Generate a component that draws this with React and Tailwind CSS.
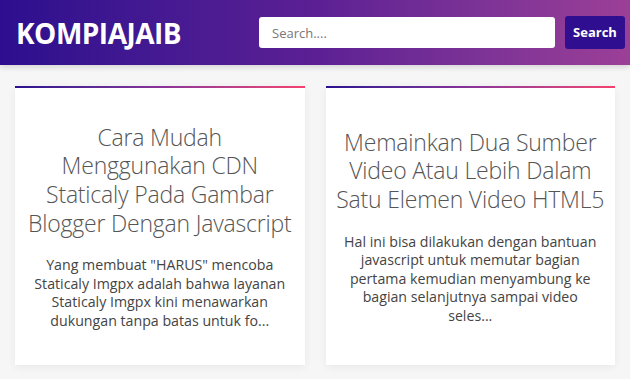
function Card({ title, excerpt }) {
  return (
    <article className="h-[279px] bg-white shadow-[0_2px_8px_rgba(0,0,0,0.06)] flex flex-col">
      <div className="h-[2px] bg-gradient-to-r from-[#2c0f8f] via-[#8a3399] to-[#f5406e]" />
      <div className="flex-1 flex flex-col justify-center items-center px-[4px] text-center">
        <h2 className="text-[23px] font-light leading-[28.7px] text-[#555] tracking-[-0.2px]">
          {title.map((l, i) => (
            <span key={i} className="block whitespace-nowrap">{l}</span>
          ))}
        </h2>
        <p className="mt-[19px] text-[14.2px] leading-[18.5px] text-[#444]">
          {excerpt.map((l, i) => (
            <span key={i} className="block whitespace-nowrap">{l}</span>
          ))}
        </p>
      </div>
    </article>
  );
}

export default function App() {
  const font = { fontFamily: '"Open Sans", "Noto Sans", sans-serif' };
  return (
    <div className="min-h-[379px] bg-[#f6f6f6]" style={font}>
      <header className="h-[65px] flex items-center justify-between pl-[16px] pr-[5px] bg-gradient-to-r from-[#2d0e8e] via-[#5c1f94] to-[#9c3f97] shadow-[0_2px_6px_rgba(0,0,0,0.15)]">
        <div className="text-white font-bold text-[28px] tracking-[-0.5px] leading-none">KOMPIAJAIB</div>
        <div className="flex items-center gap-[10px]">
          <input
            className="w-[296px] h-[31px] bg-white rounded-[3px] px-[13px] text-[13px] text-[#333] placeholder-[#777] outline-none"
            placeholder="Search...."
          />
          <button className="w-[60px] h-[33px] rounded-[3px] bg-[#2f0f8f] text-white text-[13px] font-bold">
            Search
          </button>
        </div>
      </header>
      <main className="grid grid-cols-2 gap-[21px] px-[15px] pt-[21px] pb-[14px]">
        <Card
          title={["Cara Mudah", "Menggunakan CDN", "Staticaly Pada Gambar", "Blogger Dengan Javascript"]}
          excerpt={[
            'Yang membuat "HARUS" mencoba',
            "Staticaly Imgpx adalah bahwa layanan",
            "Staticaly Imgpx kini menawarkan",
            "dukungan tanpa batas untuk fo...",
          ]}
        />
        <Card
          title={["Memainkan Dua Sumber", "Video Atau Lebih Dalam", "Satu Elemen Video HTML5"]}
          excerpt={[
            "Hal ini bisa dilakukan dengan bantuan",
            "javascript untuk memutar bagian",
            "pertama kemudian menyambung ke",
            "bagian selanjutnya sampai video",
            "seles...",
          ]}
        />
      </main>
    </div>
  );
}
